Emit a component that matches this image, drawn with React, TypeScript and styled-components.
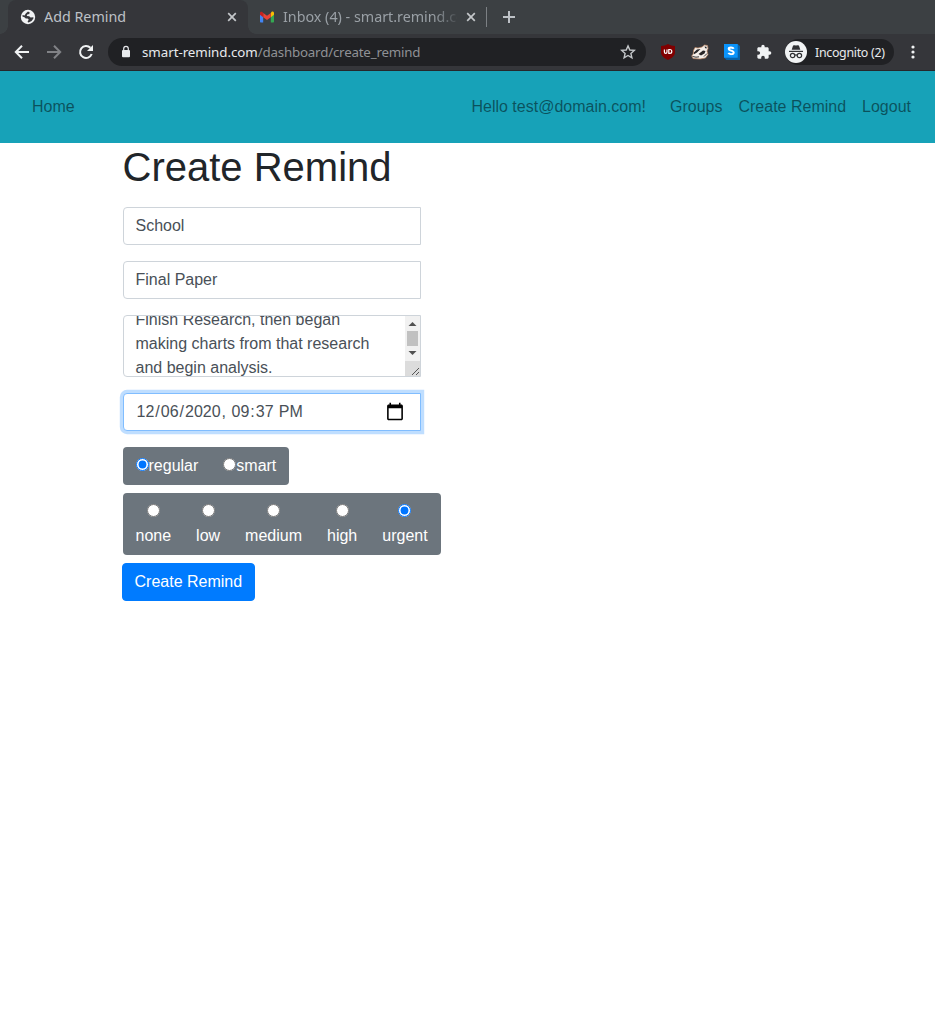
import React from "react";
import styled, { createGlobalStyle, css } from "styled-components";

const GlobalStyle = createGlobalStyle`
  *, *::before, *::after { box-sizing: border-box; }
  html, body { margin: 0; background: #fff; }
  body {
    font-family: "Liberation Sans", Arial, sans-serif;
    font-size: 16px;
    line-height: 1.5;
    color: #212529;
  }
`;

const Page = styled.div`
  width: 935px;
  height: 1030px;
  overflow: hidden;
  background: #fff;
`;

/* ---------- browser window ---------- */

const Chrome = styled.header`
  font-family: "Noto Sans", sans-serif;
  line-height: 20px;
  background: #35363a;
  border-bottom: 1px solid #26272b;
  height: 71px;
`;

const TabStrip = styled.div`
  display: flex;
  height: 34px;
  padding-left: 8px;
  background: #3c4043;
`;

const Tab = styled.div<{ $active?: boolean }>`
  position: relative;
  display: flex;
  align-items: center;
  width: ${(p) => (p.$active ? 240 : 239)}px;
  height: 34px;
  padding: 0 10px 0 ${(p) => (p.$active ? 12 : 11)}px;
  gap: 8px;
  color: ${(p) => (p.$active ? "#bdc1c6" : "#9aa0a6")};
  font-size: 14.3px;
  ${(p) =>
    p.$active &&
    css`
      background: #35363a;
      border-radius: 8px 8px 0 0;
      &::before,
      &::after {
        content: "";
        position: absolute;
        bottom: 0;
        width: 8px;
        height: 8px;
      }
      &::before {
        left: -8px;
        background: radial-gradient(circle at 0 0, transparent 7.5px, #35363a 8px);
      }
      &::after {
        right: -8px;
        background: radial-gradient(circle at 100% 0, transparent 7.5px, #35363a 8px);
      }
    `}
`;

const TabTitle = styled.span<{ $fade?: boolean }>`
  flex: 1;
  min-width: 0;
  overflow: hidden;
  white-space: nowrap;
  ${(p) => p.$fade && "mask-image: linear-gradient(to right, #000 150px, transparent 178px);"}
`;

const TabDivider = styled.span`
  width: 1px;
  height: 20px;
  margin: 7px 15px 0 -1px;
  background: #7c8084;
`;

const Toolbar = styled.div`
  display: flex;
  align-items: center;
  height: 36px;
  padding: 0 14px 0 14px;
`;

const NavButtons = styled.div`
  display: flex;
  gap: 16px;
  margin-right: 14px;
`;

const Omnibox = styled.div`
  display: flex;
  align-items: center;
  width: 538px;
  height: 28px;
  padding: 0 10px 0 12px;
  border-radius: 14px;
  background: #202124;
  color: #8f9195;
  font-size: 13.33px;
`;

const Url = styled.span`
  flex: 1;
  margin-left: 10px;
  white-space: nowrap;
  letter-spacing: -0.2px;
  b {
    font-weight: 400;
    letter-spacing: -0.05px;
    color: #e8eaed;
  }
`;

const Extensions = styled.div`
  display: flex;
  align-items: center;
  gap: 16px;
  margin: 0 13px 0 14px;
`;

const Incognito = styled.div`
  display: flex;
  align-items: center;
  gap: 8px;
  width: 109px;
  height: 26px;
  border-radius: 13px;
  background: #202124;
  color: #e8eaed;
  font-size: 12.4px;
  letter-spacing: -0.3px;
  white-space: nowrap;
  span {
    margin-top: 2px;
  }
`;

const MenuIcon = styled.svg`
  flex: none;
  margin-left: 15px;
`;

/* ---------- site ---------- */

const SiteNav = styled.nav`
  display: flex;
  align-items: center;
  height: 72px;
  padding: 0 24px 0 32px;
  gap: 16px;
  background: #17a2b8;
  color: rgba(0, 0, 0, 0.5);
`;

const Greeting = styled.span`
  margin-left: auto;
  margin-right: 8px;
`;

const Content = styled.main`
  width: 320px;
  margin-left: 122.5px;
`;

const Title = styled.h1`
  margin: 0 0 16px;
  font-size: 40px;
  font-weight: 400;
  line-height: 48px;
`;

const control = css`
  display: block;
  width: 298px;
  margin: 0 0 16px;
  border: 1px solid #ced4da;
  border-radius: 4px 0 0 4px;
  background: #fff;
  color: #495057;
  font: 16px/24px "Liberation Sans", Arial, sans-serif;
`;

const Field = styled.input`
  ${control}
  height: 38px;
  padding: 6px 12px;
  outline: none;
`;

const DateField = styled(Field)`
  border-color: #80bdff;
  box-shadow: 0 0 0 3.2px rgba(0, 123, 255, 0.25);
  &::-webkit-calendar-picker-indicator {
    width: 20px;
    height: 20px;
    padding: 0;
    margin-right: 3px;
  }
`;

const Notes = styled.div`
  ${control}
  display: flex;
  height: 62px;
  overflow: hidden;
`;

const NotesText = styled.div`
  flex: 1;
  margin-top: -8px;
  padding: 0 12px;
`;

const ScrollColumn = styled.div`
  display: flex;
  flex-direction: column;
  width: 15px;
  background: #f1f1f1;
  svg {
    display: block;
  }
`;

const ButtonGroup = styled.div`
  display: flex;
  width: max-content;
  margin-bottom: 8px;
  border-radius: 4px;
  background: #6c757d;
  color: #fff;
`;

const Choice = styled.label<{ $stacked?: boolean }>`
  padding: 7px 13px;
  text-align: center;
  line-height: 24px;
  & + & {
    margin-left: -1px;
  }
  input {
    margin: 0;
    width: 13px;
    height: 13px;
  }
  span {
    display: ${(p) => (p.$stacked ? "block" : "inline")};
  }
`;

const Submit = styled.button`
  display: block;
  height: 38px;
  margin-left: -1px;
  padding: 6px 12px;
  border: 1px solid #007bff;
  border-radius: 4px;
  background: #007bff;
  color: #fff;
  font: 16px/24px "Liberation Sans", Arial, sans-serif;
`;

/* ---------- icons ---------- */

const Globe = () => (
  <svg width="16" height="16" viewBox="0 0 16 16">
    <circle cx="8" cy="8" r="7.200" fill="#f1f3f4" />
    <path d="M8 2.400 9.800 3.400 9.200 5 7.200 5.600 6.800 7 9.200 7.200 10.600 8.600 13.400 8.200 13.400 9.400 11.600 12 8.600 13.600 7.600 13 8 11.800 8.800 10.800 7.600 9.600 5.800 9.400 4.400 8.200 2.400 7.400 2.600 6 4.600 6.400 5.800 4.600z" fill="#35363a" />
  </svg>
);

const Close = () => (
  <svg width="12" height="12" viewBox="0 0 12 12">
    <path d="M2.200 2.200 9.800 9.800M9.800 2.200 2.200 9.800" stroke="#c4c7ca" strokeWidth="1.700" />
  </svg>
);

const Gmail = () => (
  <svg width="16" height="16" viewBox="0 0 16 16">
    <path d="M1 5v7.500c0 .6.4 1 1 1h2.200V7z" fill="#4285f4" />
    <path d="M15 5v7.500c0 .6-.4 1-1 1h-2.200V7z" fill="#34a853" />
    <path d="M11.800 4v4.200L15 5.800V4.100c0-1.400-1.500-2-2.500-1.200z" fill="#fbbc04" />
    <path d="M4.200 8.200V4L8 6.800 11.800 4v4.200L8 11z" fill="#ea4335" />
    <path d="M1 4.100v1.700l3.200 2.400V4l-.9-.9C2.300 2.300 1 2.900 1 4.100z" fill="#c5221f" />
  </svg>
);

const Plus = () => (
  <svg width="14" height="34" viewBox="0 0 14 34">
    <path d="M7 11v12M1 17h12" stroke="#bdc1c6" strokeWidth="2" />
  </svg>
);

const Arrow = ({ forward }: { forward?: boolean }) => (
  <svg width="16" height="16" viewBox="0 0 16 16">
    <path
      d={forward ? "M1 8h13M8 1.8 14.2 8 8 14.2" : "M15 8H2M8 1.8 1.8 8 8 14.2"}
      fill="none"
      stroke={forward ? "#818286" : "#f1f3f4"}
      strokeWidth="2"
    />
  </svg>
);

const Reload = () => (
  <svg width="16" height="16" viewBox="0 0 16 16">
    <path d="M13.700 10A6 6 0 1 1 12.400 3.800" fill="none" stroke="#f1f3f4" strokeWidth="2" />
    <path d="M15 1v6H9z" fill="#f1f3f4" />
  </svg>
);

const Lock = () => (
  <svg width="12" height="14" viewBox="0 0 12 14">
    <rect x="2" y="5" width="8" height="7.300" rx="1" fill="#e8eaed" />
    <path d="M3.700 5.500V3.700a2.300 2.300 0 0 1 4.600 0v1.800" fill="none" stroke="#e8eaed" strokeWidth="1.200" />
  </svg>
);

const Star = () => (
  <svg width="16" height="16" viewBox="0 0 16 16">
    <path
      d="M8 1.900 9.800 6l4.500.4-3.400 3 1 4.400L8 11.500l-3.900 2.300 1-4.400-3.400-3L6.200 6z"
      fill="none"
      stroke="#c4c7ca"
      strokeWidth="1.400"
    />
  </svg>
);

const Shield = () => (
  <svg width="16" height="16" viewBox="0 0 16 16">
    <path d="M8 0c2 1.300 4.300 2 7 2v6c0 4-3.200 6.300-7 8-3.800-1.700-7-4-7-8V2c2.700 0 5-.7 7-2z" fill="#800000" />
    <path d="M4.400 5.500v2.600a1.300 1.300 0 0 0 2.600 0V5.500M8.800 5.500v3.800h1.100a1.900 1.900 0 0 0 0-3.800z" fill="none" stroke="#fff" strokeWidth="1.200" />
  </svg>
);

const Badger = () => (
  <svg width="16" height="16" viewBox="0 0 16 16" overflow="visible">
    <path d="M1.500 6.500 3 3.500 6 4l4-1 2.500-2 3 .5.5 3-1 2.500 1 3.500-2.500 3.500-5.500 1-7-.5L-.3 12l1.500-2z" fill="#f5efe9" stroke="#b9825f" strokeWidth=".7" />
    <path d="M1.800 8.500 5 5.500l3.500-.5L5 8.500 2 10.300zM6.500 10l4.500-3.500 2.500.5-1 2.500-3.500 2zM12.500 2.500l2 .2.200 1.800-1.500-.3z" fill="#292627" />
    <path d="m.5 12.500 3.500.7 3-.4M12 12.500l3-3" fill="none" stroke="#3a3433" strokeWidth="1" />
  </svg>
);

const SBadge = () => (
  <svg width="16" height="16" viewBox="0 0 16 16">
    <path d="M13.500 0 16 2v14H2.500L0 13.500z" fill="#0862a8" />
    <rect width="13.700" height="13.700" fill="#0a94fb" />
    <path d="M9.700 4.700C9 3.300 4.700 3 4.700 5s5 1.300 5 3.500-4.500 2-5.300.4" fill="none" stroke="#fff" strokeWidth="2" />
  </svg>
);

const Puzzle = () => (
  <svg width="16" height="16" viewBox="0 0 24 24">
    <path
      d="M20.500 11H19V7c0-1.100-.9-2-2-2h-4V3.500a2.500 2.500 0 0 0-5 0V5H4c-1.100 0-2 .9-2 2v3.800h1.500a2.700 2.700 0 0 1 0 5.400H2V20c0 1.100.9 2 2 2h3.800v-1.500a2.700 2.700 0 0 1 5.400 0V22H17c1.100 0 2-.9 2-2v-4h1.500a2.500 2.500 0 0 0 0-5z"
      fill="#f1f3f4"
    />
  </svg>
);

const Spy = () => (
  <svg width="22" height="22" viewBox="0 0 22 22">
    <circle cx="11" cy="11" r="11" fill="#f1f3f4" />
    <path d="M6.700 8.800 8 4.800c.2-.6.7-.8 1.300-.6l1.700.4 1.700-.4c.6-.2 1.100 0 1.300.6l1.300 4z" fill="#303134" />
    <path d="M4 10.400h14" stroke="#303134" strokeWidth="1.200" />
    <g fill="none" stroke="#303134" strokeWidth="1.200">
      <circle cx="7.600" cy="14.500" r="2.200" />
      <circle cx="14.400" cy="14.500" r="2.200" />
      <path d="M9.800 14.200q1.200-.8 2.400 0" />
    </g>
  </svg>
);

const ScrollBar = () => (
  <ScrollColumn>
    <svg width="15" height="60" viewBox="0 0 15 60">
      <path d="M3.500 10h8l-4-4z" fill="#505050" />
      <rect x="2" y="15" width="11" height="15" fill="#c1c1c1" />
      <path d="M3.500 35h8l-4 4z" fill="#505050" />
      <rect y="45" width="15" height="15" fill="#dcdcdc" />
      <path d="m7 59 7-7M11 59l3-3" stroke="#555" strokeWidth="1" />
    </svg>
  </ScrollColumn>
);

const kinds = ["regular", "smart"];
const priorities = ["none", "low", "medium", "high", "urgent"];

export default function App() {
  return (
    <Page>
      <GlobalStyle />
      <Chrome>
        <TabStrip>
          <Tab $active>
            <Globe />
            <TabTitle>Add Remind</TabTitle>
            <Close />
          </Tab>
          <Tab>
            <Gmail />
            <TabTitle $fade>Inbox (4) - smart.remind.com</TabTitle>
            <Close />
          </Tab>
          <TabDivider />
          <Plus />
        </TabStrip>
        <Toolbar>
          <NavButtons>
            <Arrow />
            <Arrow forward />
            <Reload />
          </NavButtons>
          <Omnibox>
            <Lock />
            <Url>
              <b>smart-remind.com</b>/dashboard/create_remind
            </Url>
            <Star />
          </Omnibox>
          <Extensions>
            <Shield />
            <Badger />
            <SBadge />
            <Puzzle />
          </Extensions>
          <Incognito>
            <Spy />
            <span>Incognito (2)</span>
          </Incognito>
          <MenuIcon width="8" height="16" viewBox="0 0 8 16" fill="#f1f3f4">
            <circle cx="4" cy="3" r="1.600" />
            <circle cx="4" cy="8" r="1.600" />
            <circle cx="4" cy="13" r="1.600" />
          </MenuIcon>
        </Toolbar>
      </Chrome>

      <SiteNav>
        <span>Home</span>
        <Greeting>Hello test@domain.com!</Greeting>
        <span>Groups</span>
        <span>Create Remind</span>
        <span>Logout</span>
      </SiteNav>

      <Content>
        <Title>Create Remind</Title>
        <Field type="text" defaultValue="School" />
        <Field type="text" defaultValue="Final Paper" />
        <Notes>
          <NotesText>Finish Research, then began making charts from that research and begin analysis.</NotesText>
          <ScrollBar />
        </Notes>
        <DateField type="datetime-local" defaultValue="2020-12-06T21:37" />
        <ButtonGroup>
          {kinds.map((kind) => (
            <Choice key={kind}>
              <input type="radio" name="kind" defaultChecked={kind === "regular"} />
              <span>{kind}</span>
            </Choice>
          ))}
        </ButtonGroup>
        <ButtonGroup>
          {priorities.map((priority) => (
            <Choice key={priority} $stacked>
              <input type="radio" name="priority" defaultChecked={priority === "urgent"} />
              <span>{priority}</span>
            </Choice>
          ))}
        </ButtonGroup>
        <Submit>Create Remind</Submit>
      </Content>
    </Page>
  );
}
